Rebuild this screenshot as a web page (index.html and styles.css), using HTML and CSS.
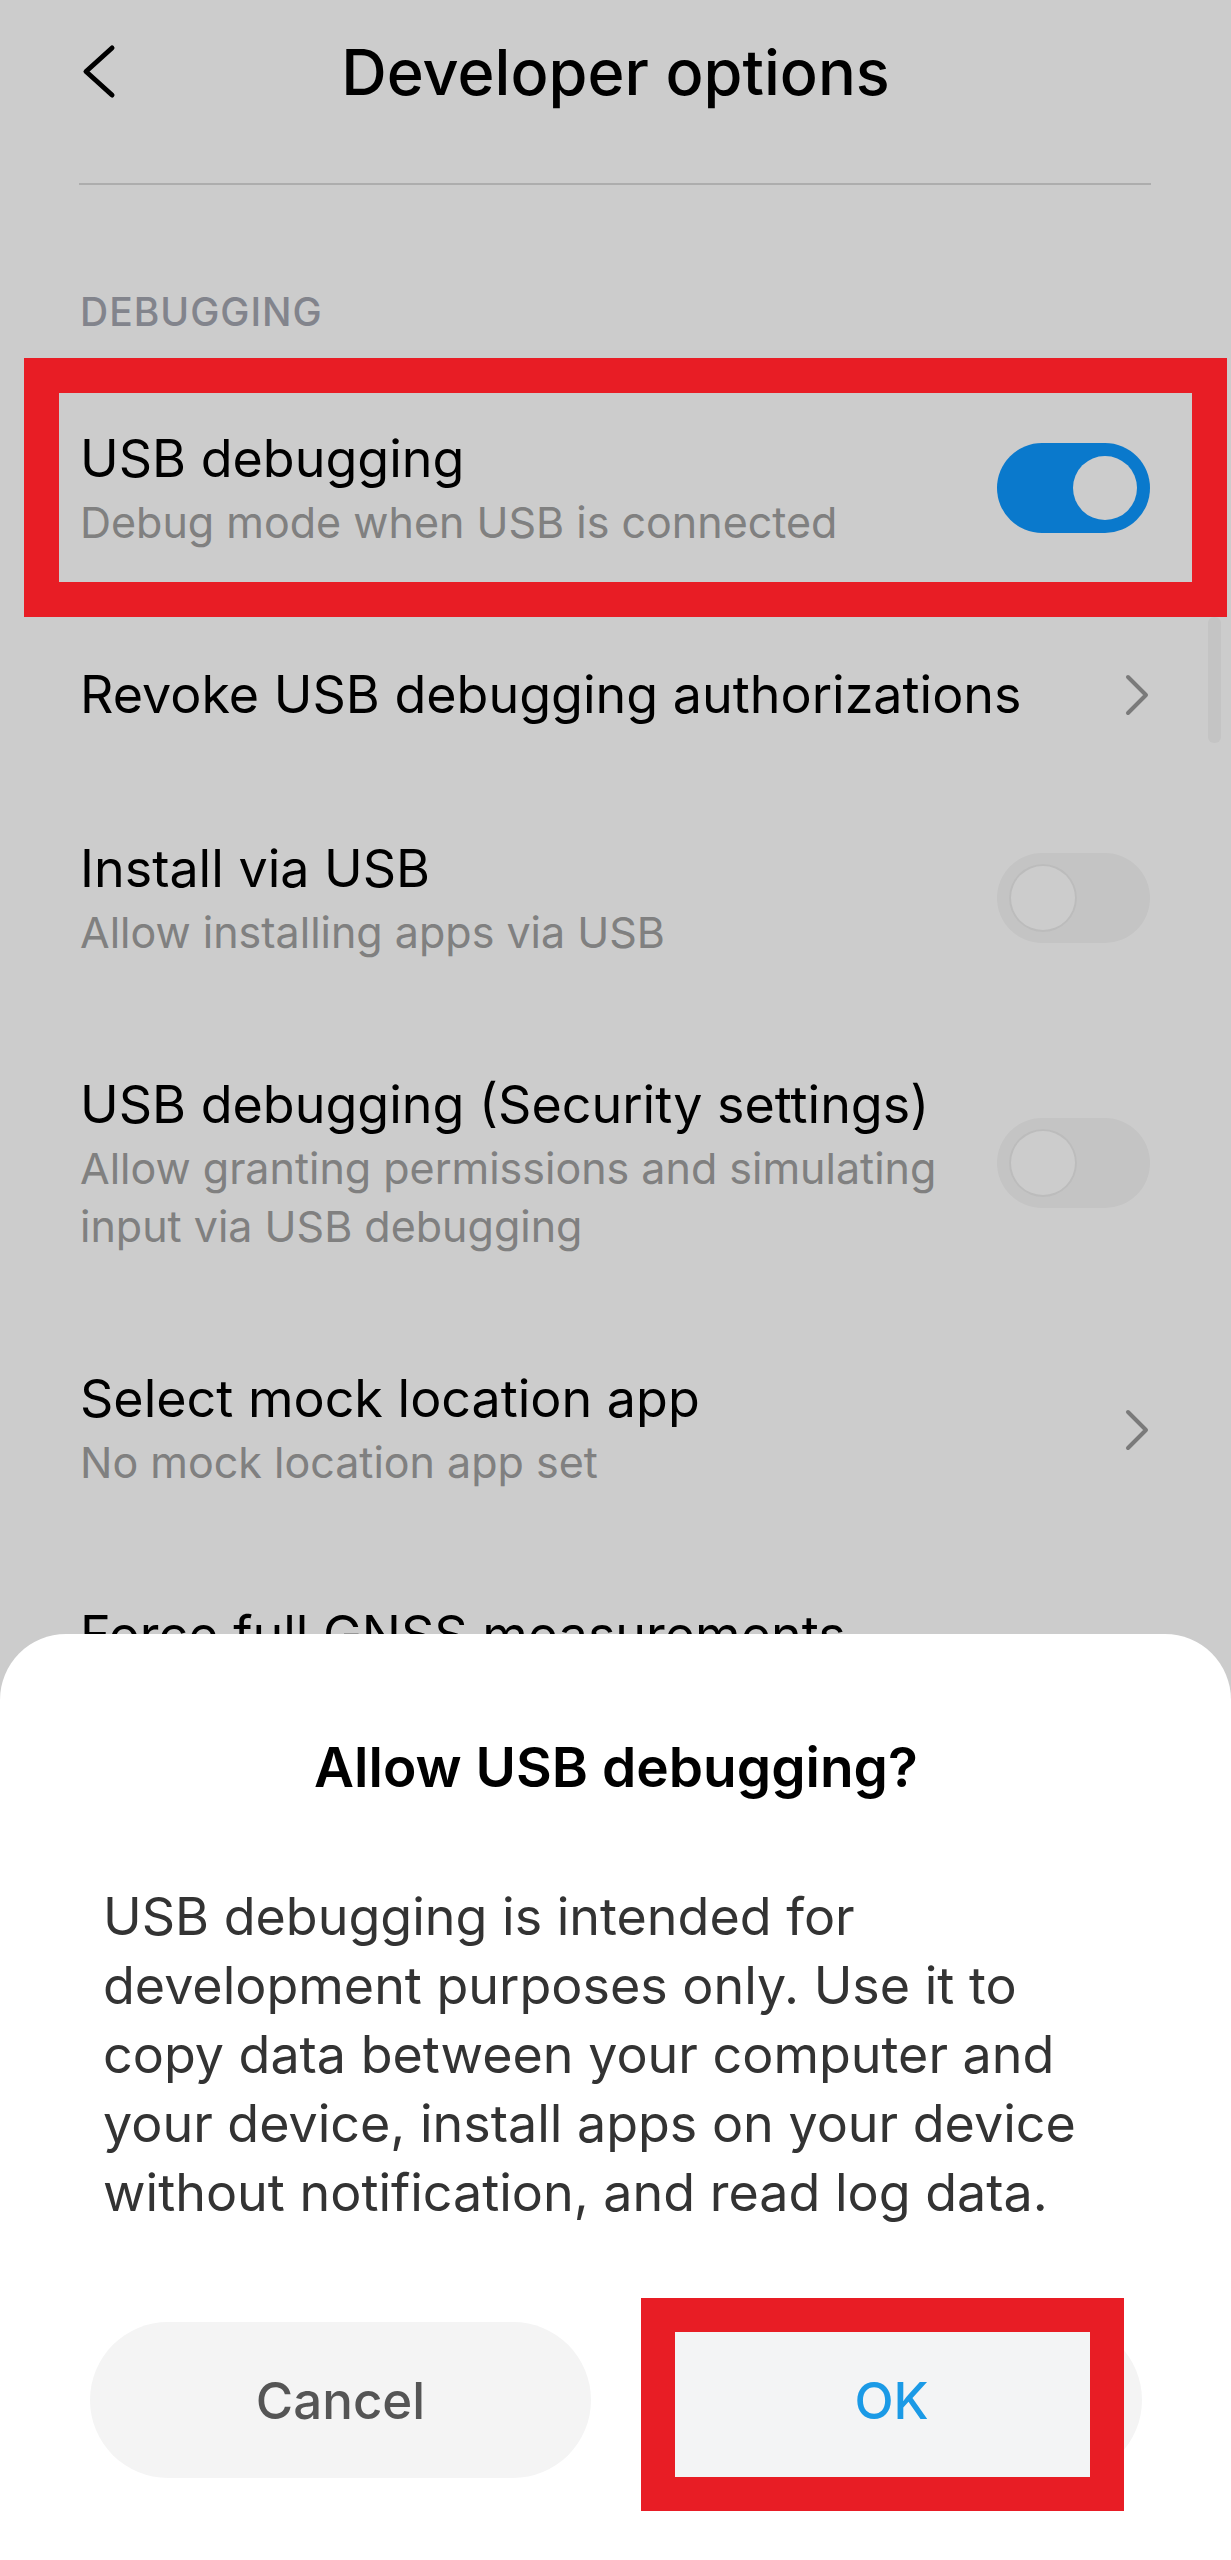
FILE: index.html
```html
<!DOCTYPE html>
<html lang="en">
<head>
    <meta charset="UTF-8">
    <meta name="viewport" content="width=device-width, initial-scale=1.0">
    <title>Developer options</title>
    <link rel="stylesheet" href="styles.css">
</head>
<body>
    <div class="screen">
        <header class="topbar">
            <span class="back">
                <svg width="40" height="60" viewBox="0 0 40 60"><polyline points="32,6 6,29.5 32,53" fill="none" stroke="#000" stroke-width="5" stroke-linecap="round" stroke-linejoin="round"/></svg>
            </span>
            <h1>Developer options</h1>
            <span></span>
        </header>
        <div class="divider"></div>

        <div class="section-label">DEBUGGING</div>

        <ul class="list">
            <li class="item">
                <div class="item-text">
                    <div class="item-title">USB debugging</div>
                    <div class="item-sub">Debug mode when USB is connected</div>
                </div>
                <span class="switch on"></span>
            </li>
            <li class="item">
                <div class="item-text">
                    <div class="item-title">Revoke USB debugging authorizations</div>
                </div>
                <svg class="chev" width="26" height="42" viewBox="0 0 26 42"><polyline points="4,3 22,21 4,39" fill="none" stroke="#999" stroke-width="4" stroke-linecap="round" stroke-linejoin="round"/></svg>
            </li>
            <li class="item">
                <div class="item-text">
                    <div class="item-title">Install via USB</div>
                    <div class="item-sub">Allow installing apps via USB</div>
                </div>
                <span class="switch"></span>
            </li>
            <li class="item">
                <div class="item-text">
                    <div class="item-title">USB debugging (Security settings)</div>
                    <div class="item-sub">Allow granting permissions and simulating input via USB debugging</div>
                </div>
                <span class="switch"></span>
            </li>
            <li class="item">
                <div class="item-text">
                    <div class="item-title">Select mock location app</div>
                    <div class="item-sub">No mock location app set</div>
                </div>
                <svg class="chev" width="26" height="42" viewBox="0 0 26 42"><polyline points="4,3 22,21 4,39" fill="none" stroke="#999" stroke-width="4" stroke-linecap="round" stroke-linejoin="round"/></svg>
            </li>
            <li class="item">
                <div class="item-text">
                    <div class="item-title">Force full GNSS measurements</div>
                </div>
            </li>
        </ul>
        <div class="scrollbar"></div>
    </div>

    <!-- dimmed background behind the dialog -->
    <div class="scrim"></div>

    <div class="sheet">
        <h2>Allow USB debugging?</h2>
        <p>USB debugging is intended for development purposes only. Use it to copy data between your computer and your device, install apps on your device without notification, and read log data.</p>
        <div class="actions">
            <button class="btn">Cancel</button>
            <button class="btn ok"><span>OK</span></button>
        </div>
    </div>

    <!-- red highlight boxes -->
    <div class="mark mark-usb"></div>
    <div class="mark mark-ok"></div>
</body>
</html>
```

FILE: styles.css
```css
html, body {
    margin: 0;
    padding: 0;
}
body {
    width: 1231px;
    height: 2560px;
    overflow: hidden;
    position: relative;
    background-color: #ffffff;
    font-family: Inter, "Noto Sans", sans-serif;
    color: #000;
}
.topbar {
    display: grid;
    grid-template-columns: 1fr auto 1fr;
    align-items: center;
    height: 144px;
    padding: 0 80px;
}
.back svg {
    display: block;
}
.topbar h1 {
    margin: 0;
    font-size: 63px;
    font-weight: 500;
    line-height: 72px;
}
.divider {
    height: 2px;
    background-color: #d9d9d9;
    margin: 39px 80px 0 79px;
}
.section-label {
    margin: 102px 80px 0;
    font-size: 39px;
    font-weight: 500;
    letter-spacing: 1px;
    line-height: 50px;
    color: #a3a5b0;
}
.list {
    list-style: none;
    margin: 35px 0 0;
    padding: 0;
}
.item {
    display: flex;
    align-items: center;
    justify-content: space-between;
    gap: 40px;
    padding: 57px 81px 57px 80px;
}
.item-title {
    font-size: 52px;
    line-height: 60px;
}
.item-sub {
    margin-top: 4px;
    font-size: 43px;
    line-height: 58px;
    color: #a0a0a0;
}
.switch {
    flex: none;
    position: relative;
    width: 153px;
    height: 90px;
    margin-top: -4px;
    border-radius: 45px;
    background-color: #f6f6f6;
}
.switch::after {
    content: "";
    position: absolute;
    top: 13px;
    left: 14px;
    width: 64px;
    height: 64px;
    border-radius: 50%;
    background-color: #fff;
    box-shadow: 0 0 0 2px #ececec;
}
.switch.on {
    background-color: #0d98ff;
}
.switch.on::after {
    left: auto;
    right: 13px;
    box-shadow: none;
}
.chev {
    flex: none;
    display: block;
}
.scrollbar {
    position: absolute;
    top: 617px;
    right: 10px;
    width: 13px;
    height: 126px;
    border-radius: 6px;
    background-color: rgba(0, 0, 0, 0.04);
}
.scrim {
    position: absolute;
    top: 0;
    left: 0;
    right: 0;
    bottom: 0;
    background-color: rgba(0, 0, 0, 0.2);
}
.sheet {
    position: absolute;
    left: 0;
    right: 0;
    bottom: 0;
    height: 926px;
    box-sizing: border-box;
    display: flex;
    flex-direction: column;
    padding: 98px 89px 82px 90px;
    background-color: #fff;
    border-radius: 66px 66px 0 0;
}
.sheet h2 {
    margin: 0;
    text-align: center;
    font-size: 55px;
    font-weight: 600;
    line-height: 70px;
}
.sheet p {
    margin: 80px 13px 0;
    font-size: 52px;
    line-height: 69px;
    color: #333;
}
.actions {
    margin-top: auto;
    display: flex;
    gap: 50px;
}
.btn {
    flex: 1;
    height: 156px;
    border: none;
    border-radius: 78px;
    background-color: #f4f4f4;
    font-family: Inter, "Noto Sans", sans-serif;
    font-size: 51px;
    font-weight: 500;
    color: #555;
}
.btn.ok {
    color: #1b9ae6;
}
/* keep the label above the highlight box */
.btn.ok span {
    position: relative;
    z-index: 2;
}
.mark {
    position: absolute;
    z-index: 1;
    box-sizing: border-box;
    border: 35px solid #e81d25;
}
.mark-usb {
    left: 24px;
    top: 358px;
    width: 1203px;
    height: 259px;
}
.mark-ok {
    left: 641px;
    top: 2298px;
    width: 483px;
    height: 213px;
    border-width: 34px;
    background-color: #f3f4f5;
}
```
